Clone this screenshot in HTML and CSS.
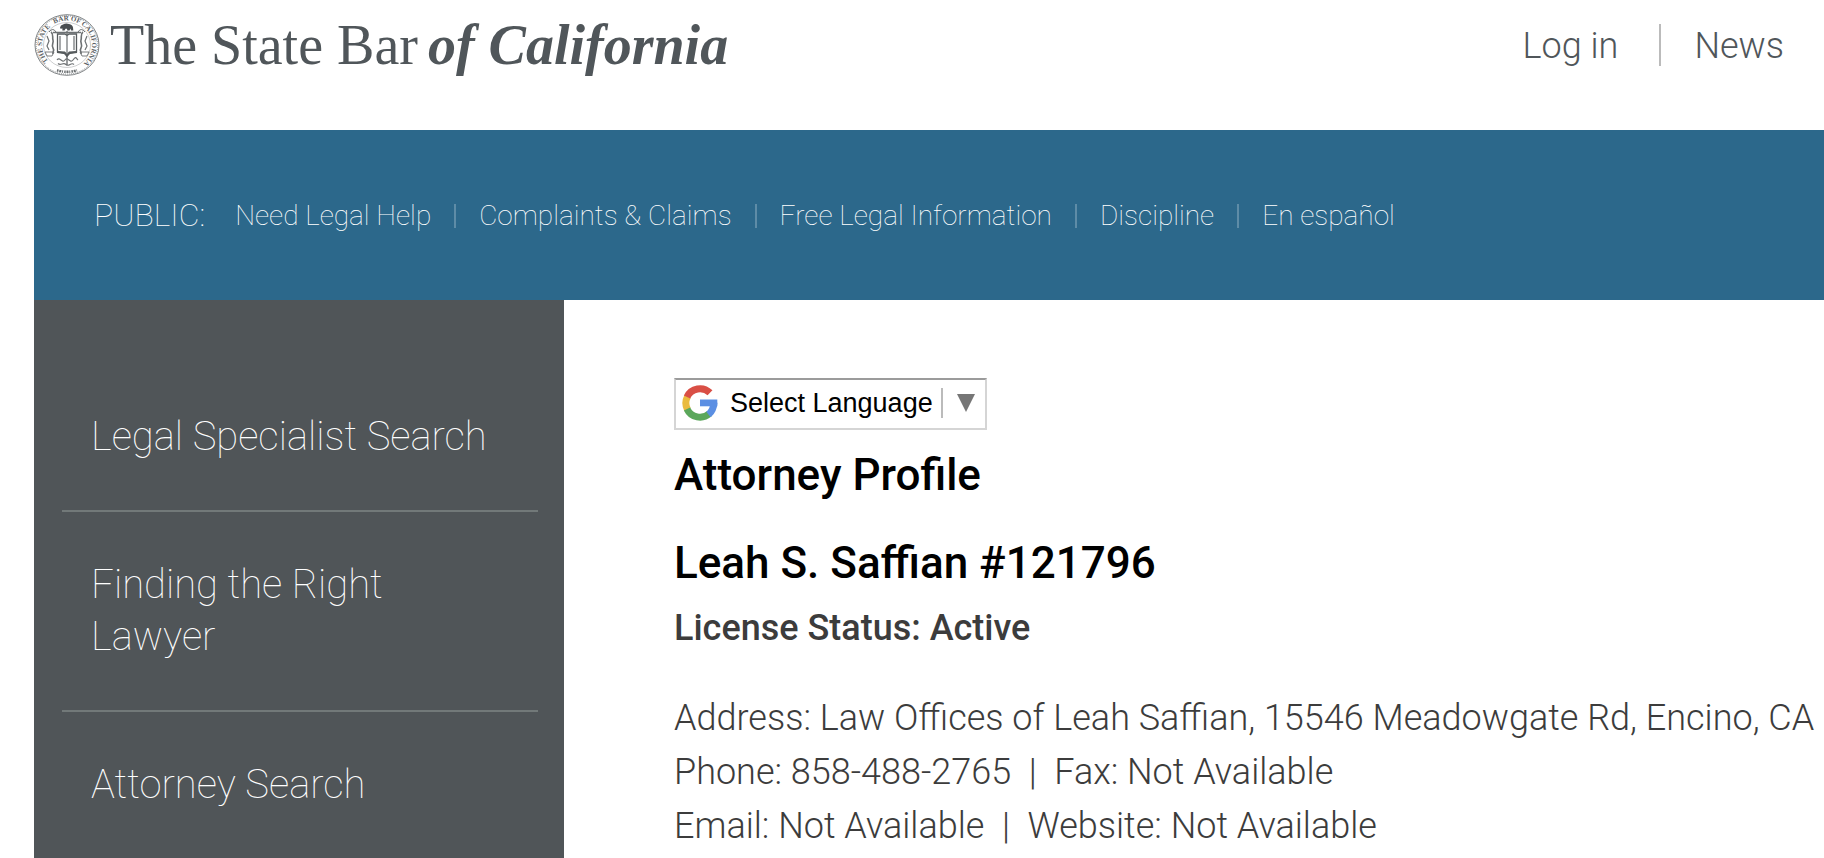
FILE: index.html
```html
<!DOCTYPE html>
<html lang="en">
<head>
<meta charset="UTF-8">
<meta name="viewport" content="width=device-width, initial-scale=1.0">
<title>Leah S. Saffian # 121796 - Attorney Licensee Search</title>
<link rel="stylesheet" href="styles.css">
</head>
<body>
<header class="header">
  <a class="logo" href="#">
    <svg class="seal" viewBox="0 0 66 62" aria-hidden="true">
      <defs>
        <path id="ring" d="M33 55.500 A25 24.500 0 1 1 33.100 55.500"/>
      </defs>
      <g fill="none" stroke="#6d7173">
        <ellipse cx="33" cy="31" rx="32" ry="30.300" stroke-width="1" stroke="#808486"/>
        <ellipse cx="33" cy="31" rx="30.800" ry="29.100" stroke-width=".8" stroke-dasharray="1 1"/>
        <ellipse cx="33" cy="31" rx="23.500" ry="22.500" stroke-width=".5" stroke="#9a9d9f"/>
        <path d="M23 56.300q10 3 20 0" stroke-width="2.500" stroke-dasharray="1.500 .8 2 .8 1 1.200"/>
        <path d="M19 18.500h28M33 17v34" stroke-width="1.400"/>
        <path d="M22 18q-3-5-7 0M44 18q3-5 7 0" stroke-width="1"/>
        <path d="M17 18c3 2 1 5 2 8s-2 5 0 8-1 4 0 6M49 18c-3 2-1 5-2 8s2 5 0 8 1 4 0 6" stroke-width="1.600"/>
        <path d="M13 22l2 5-2 5 2 4M53 22l-2 5 2 5-2 4" stroke-width="1.200"/>
        <path d="M11 38h9l-2 4h-5zM46 38h9l-2 4h-5z" stroke-width=".9"/>
        <path d="M23 46c3-4 5 4 8 0s5 4 8 0 3-2 5 0M24 49.500c3 3 5-2 8 1s5-3 8 0" stroke-width="1.200"/>
      </g>
      <path d="M23.500 20h7.500l2 1.500 2-1.500h7.500v18l-7.500 1-2 3-2-3-7.500-1z" fill="#fff" stroke="#565b5d" stroke-width="1.300"/>
      <path d="M26 22v14M40 22v14M33 21v20" stroke="#6d7173" stroke-width="1.200"/>
      <path d="M23 37l8 .500 2 2.500 2-2.500 8-.500v2l-7 1-3 3-3-3-7-1z" fill="#565b5d"/>
      <path d="M26 13.500q.5-2.500 3-3 3-1.500 6-.500 3.500.500 4 3.500l.3 3h-2.300l-.5-2-1 2h-2.200l-.3-1.800h-1.500l-1 1.800h-2.200l.2-2-2 .3z" fill="#484d50"/>
      <g class="seal-text" text-anchor="middle">
        <text><textPath href="#ring" startOffset="26%">THE STATE</textPath></text>
        <text><textPath href="#ring" startOffset="50%">BAR OF</textPath></text>
        <text><textPath href="#ring" startOffset="74%">CALIFORNIA</textPath></text>
      </g>
    </svg>
    <span class="logo-name">The State Bar</span>
    <em class="logo-place">of California</em>
  </a>
  <nav class="user-nav">
    <a href="#">Log in</a>
    <a href="#">News</a>
  </nav>
</header>

<nav class="main-nav">
  <span class="nav-title">PUBLIC:</span>
  <ul class="nav-list">
    <li><a href="#">Need Legal Help</a></li>
    <li><a href="#">Complaints &amp; Claims</a></li>
    <li><a href="#">Free Legal Information</a></li>
    <li><a href="#">Discipline</a></li>
    <li><a href="#">En español</a></li>
  </ul>
</nav>

<div class="page">
  <aside class="sidebar">
    <ul class="side-list">
      <li><a href="#">Legal Specialist Search</a></li>
      <li><a href="#">Finding the Right Lawyer</a></li>
      <li><a href="#">Attorney Search</a></li>
    </ul>
  </aside>

  <main class="content">
    <div class="translate">
      <svg class="google" viewBox="0 0 36 36" aria-hidden="true">
        <g fill="none" stroke-width="7">
          <path stroke="#eabb3e" d="M5.500 11.500a14 14 0 0 0 0 13"/>
          <path stroke="#d94f45" d="M28 7.800A14.300 14.300 0 0 0 5 12"/>
          <path stroke="#5ba75b" d="M5 24a14.300 14.300 0 0 0 22.500 4.500"/>
          <path stroke="#5b8fe3" d="M26.500 29.500q5-4 5.500-12"/>
        </g>
        <path fill="#5b8fe3" d="M18 14.500h17.300v6.800H18z"/>
      </svg>
      <select class="language" aria-label="Select Language">
        <option>Select Language</option>
      </select>
      <span class="arrow"></span>
    </div>

    <h1 class="title">Attorney Profile</h1>
    <h2 class="name">Leah S. Saffian #121796</h2>
    <p class="status">License Status: Active</p>
    <div class="details">
      <p>Address: Law Offices of Leah Saffian, 15546 Meadowgate Rd, Encino, CA</p>
      <p>Phone: 858-488-2765 &nbsp;|&nbsp; Fax: Not Available</p>
      <p>Email: Not Available &nbsp;|&nbsp; Website: Not Available</p>
    </div>
  </main>
</div>
</body>
</html>
```

FILE: styles.css
```css
* {
  box-sizing: border-box;
}
body {
  display: flex;
  flex-direction: column;
  min-height: 100vh;
  margin: 0;
  padding-left: 34px;
  background-color: #fff;
  color: #3c3c3c;
  font-family: Roboto, "Liberation Sans", sans-serif;
  font-size: 36px;
  font-weight: 300;
}
a {
  color: inherit;
  text-decoration: none;
}
ul {
  margin: 0;
  padding: 0;
  list-style: none;
}
h1, h2, p {
  margin: 0;
}

/* header */
.header {
  display: flex;
  justify-content: space-between;
  align-items: flex-start;
  height: 130px;
  padding: 14px 40px 0 0;
}
.logo {
  display: flex;
  gap: 10px;
  color: #50565a;
  font-family: "Liberation Serif", serif;
  font-size: 56px;
  line-height: 62px;
}
.seal {
  width: 66px;
  height: 62px;
}
.seal-text {
  fill: #5b6062;
  font-size: 7px;
  font-weight: 700;
}
.logo-place {
  font-weight: 700;
}
.user-nav {
  display: flex;
  padding-top: 10px;
  color: #50565a;
  line-height: 44px;
}
.user-nav a {
  height: 42px;
}
.user-nav a + a {
  margin-left: 41px;
  padding-left: 33px;
  border-left: 2px solid #bbb;
}

/* blue bar */
.main-nav {
  display: flex;
  align-items: center;
  height: 170px;
  padding-left: 60px;
  background-color: #2c688b;
  color: #fff;
  font-weight: 100;
}
.nav-title {
  margin-right: 30px;
  font-size: 32px;
}
.nav-list {
  display: flex;
  padding-top: 2px;
  font-size: 28px;
  line-height: 24px;
}
.nav-list li + li {
  margin-left: 23px;
  padding-left: 23px;
  border-left: 2px solid #5e8ca7;
}

.page {
  display: flex;
  flex: 1;
}

/* sidebar */
.sidebar {
  flex: 0 0 530px;
  padding: 64px 26px 0 28px;
  background-color: #505558;
  color: #fff;
  font-size: 40px;
  font-weight: 100;
  line-height: 52px;
}
.side-list li {
  padding: 47px 40px 47px 29px;
  border-bottom: 2px solid #727979;
}
.side-list li:last-child {
  padding-bottom: 40px;
  border-bottom: none;
}

/* profile */
.content {
  flex: 1;
  padding: 78px 0 0 110px;
}
.translate {
  display: flex;
  align-items: center;
  width: fit-content;
  height: 52px;
  padding: 0 10px 2px 6px;
  border: 2px solid #d5d5d5;
  border-top-color: #9b9b9b;
}
.google {
  width: 36px;
  height: 36px;
  margin-right: 12px;
}
.language {
  appearance: none;
  padding: 0;
  border: none;
  background: none;
  color: #000;
  font-family: "Liberation Sans", sans-serif;
  font-size: 27px;
  line-height: 30px;
}
.arrow {
  display: flex;
  align-items: center;
  height: 30px;
  margin-left: 8px;
  padding-left: 14px;
  border-left: 2px solid #bbb;
}
.arrow::after {
  content: "";
  border: 9px solid transparent;
  border-top: 18px solid #767676;
  border-bottom: none;
}
.title, .name {
  color: #000;
  font-size: 44px;
  font-weight: 500;
  line-height: 52px;
}
.title {
  margin-top: 19px;
}
.name {
  margin-top: 36px;
}
.status {
  margin-top: 12px;
  font-weight: 500;
  line-height: 54px;
}
.details {
  margin-top: 36px;
  line-height: 54px;
}
```
